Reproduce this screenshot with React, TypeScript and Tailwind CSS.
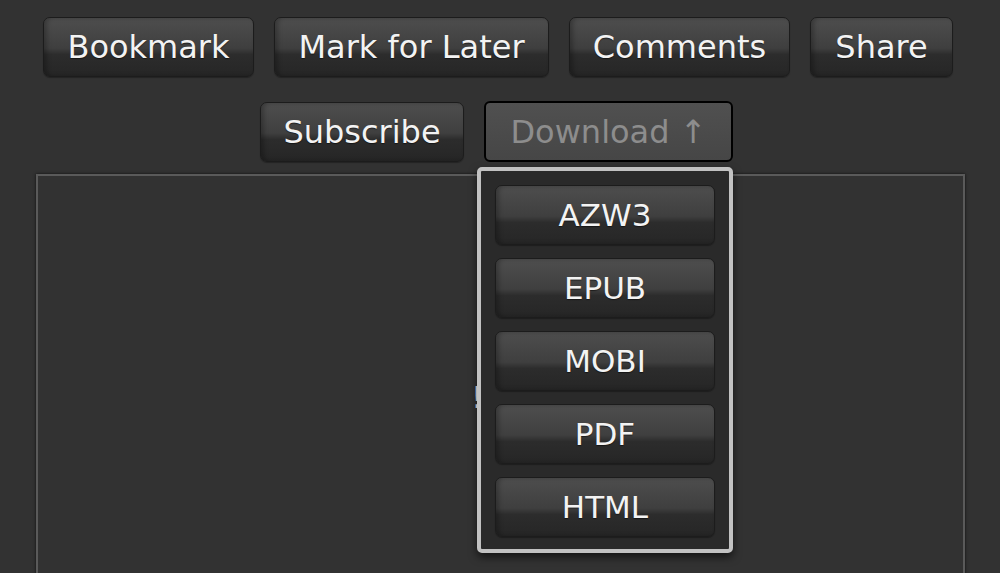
const TOP_ACTIONS = [
  { label: "Bookmark", width: "w-[211px]" },
  { label: "Mark for Later", width: "w-[275px]" },
  { label: "Comments", width: "w-[221px]" },
  { label: "Share", width: "w-[143px]" },
];
const FORMATS = ["AZW3", "EPUB", "MOBI", "PDF", "HTML"];

// shared glossy look of every dark button
const glossy =
  "rounded-[7px] border border-[#1c1c1c] bg-[linear-gradient(to_bottom,#4e4e4e_0%,#3f3f3f_52%,#2c2c2c_63%,#262626_100%)] shadow-[inset_3px_0_4px_rgba(0,0,0,0.25),0_1px_1px_rgba(0,0,0,0.3)] text-[#f3f3f3] [text-shadow:0_1px_1px_rgba(0,0,0,0.5)]";

function ActionButton({ label, className = "" }: { label: string; className?: string }) {
  return (
    <button className={`${glossy} h-[60px] text-[32px] leading-none ${className}`}>
      {label}
    </button>
  );
}

function DownloadMenu() {
  return (
    <div className="absolute left-[477px] top-[167px] w-[256px] rounded-[5px] border-4 border-[#c2c2c2] bg-[#2a2a2a] px-[14px] pb-[12px] pt-[14px] shadow-[0_4px_8px_rgba(0,0,0,0.6)]">
      <div className="flex flex-col gap-[13px]">
        {FORMATS.map((format) => (
          <button key={format} className={`${glossy} h-[60px] w-full text-[31px] leading-none`}>
            {format}
          </button>
        ))}
      </div>
    </div>
  );
}

export default function App() {
  return (
    <div
      className="relative h-[573px] w-[1000px] overflow-hidden bg-[#323232]"
      style={{ fontFamily: '"DejaVu Sans", Verdana, sans-serif' }}
    >
      <div className="flex flex-col items-center pr-[4px] pt-[17px]">
        <div className="flex gap-5">
          {TOP_ACTIONS.map((action) => (
            <ActionButton key={action.label} label={action.label} className={action.width} />
          ))}
        </div>

        <div className="mr-[3px] mt-[24px] flex items-end gap-5">
          <ActionButton label="Subscribe" className="w-[204px]" />
          <button className="h-[61px] w-[249px] rounded-[6px] border-2 border-black bg-[linear-gradient(to_bottom,#505050,#464646)] text-[32px] leading-none text-[#8d8d8d]">
            Download ↑
          </button>
        </div>
      </div>

      <div className="ml-[36px] mt-[12px] h-[420px] w-[929px] border-2 border-[#5a5a5a] bg-[#323232] shadow-[0_0_3px_rgba(0,0,0,0.7)]">
        <div className="pl-[433px] pt-[206px] text-[31px] leading-none text-[#f3f3f3]">!</div>
      </div>

      <DownloadMenu />
    </div>
  );
}
